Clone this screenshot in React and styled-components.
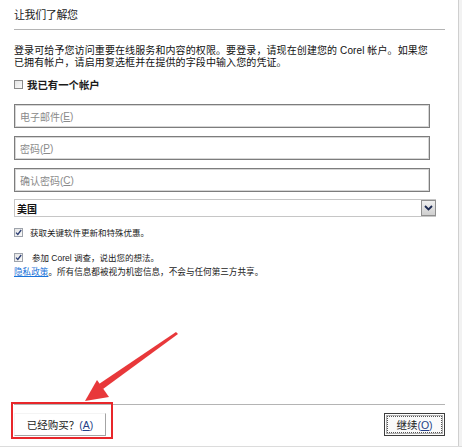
import React from "react";
import styled, { createGlobalStyle } from "styled-components";

const Global = createGlobalStyle`
  html, body {
    margin: 0;
    padding: 0;
    background: #fff;
    overflow: hidden;
  }
  body {
    font-family: "Liberation Sans", "Noto Sans CJK SC", sans-serif;
    color: #1a1a1a;
  }
`;

const Frame = styled.div`
  position: relative;
  width: 462px;
  height: 447px;
  box-sizing: border-box;
  display: flex;
  border-bottom: 1px solid #dcdcdc;
`;

const Main = styled.div`
  flex: 1;
  display: flex;
  flex-direction: column;
  padding: 0 13px 0 14px;
`;

const Rail = styled.div`
  width: 3px;
  border-left: 1px solid #cfcfcf;
  background: #f2f2f2;
`;

const Header = styled.div`
  height: 30px;
  box-sizing: border-box;
  border-bottom: 1px solid #b4b4b4;
  padding-top: 8px;
  font-size: 11px;
  line-height: 14px;
  letter-spacing: -0.4px;
  color: #222;
`;

const Intro = styled.p`
  margin: 15px 0 0;
  font-size: 10px;
  line-height: 12px;
  letter-spacing: 0.1px;
  color: #111;
`;

const Form = styled.div`
  width: 416px;
  display: flex;
  flex-direction: column;
`;

const CheckRow = styled.label`
  display: flex;
  align-items: center;
  gap: ${(p) => p.$gap || 6}px;
  height: ${(p) => p.$h || 12}px;
  margin-top: ${(p) => p.$top || 0}px;
  font-size: ${(p) => p.$size || 8.5}px;
  font-weight: ${(p) => (p.$bold ? 700 : 400)};
  color: #1a1a1a;
`;

const Box = styled.span`
  width: 7px;
  height: 7px;
  flex: none;
  border: 1px solid ${(p) => (p.$checked ? "#9ea3ab" : "#8a8a8a")};
  background: linear-gradient(135deg, #e4e4e4, #fafafa);
  display: flex;
  align-items: center;
  justify-content: center;
`;

const Field = styled.div`
  height: 24px;
  box-sizing: border-box;
  margin-top: ${(p) => p.$top}px;
  border: 1px solid #7d7d7d;
  box-shadow: inset 0 0 0 1px #d6d6d6;
  display: flex;
  align-items: center;
  padding-left: 5px;
  font-size: 10px;
  color: #8a8a8a;
  u {
    text-decoration: underline;
  }
`;

const Select = styled.div`
  width: 422px;
  height: 18px;
  box-sizing: border-box;
  margin-top: 7px;
  border: 1px solid #c6c6c6;
  border-right: none;
  display: flex;
  align-items: center;
  justify-content: space-between;
  padding-left: 2px;
  font-size: 10px;
  font-weight: 700;
  color: #111;
`;

const DropButton = styled.span`
  width: 15px;
  height: 16px;
  box-sizing: border-box;
  border: 1px solid #8f8f8f;
  background: linear-gradient(#f0f0f0, #cfcfcf);
  display: flex;
  align-items: center;
  justify-content: center;
`;

const Privacy = styled.div`
  margin-top: 3px;
  height: 12px;
  line-height: 12px;
  font-size: 8.6px;
  color: #1a1a1a;
  white-space: nowrap;
`;

const Link = styled.a`
  color: #1a73d9;
  text-decoration: underline;
`;

const Spacer = styled.div`
  flex: 1;
`;

const Footer = styled.div`
  height: 42px;
  box-sizing: border-box;
  border-top: 1px solid #b4b4b4;
  padding-top: 8px;
  display: flex;
  justify-content: space-between;
  align-items: flex-start;
`;

const Button = styled.button`
  width: ${(p) => p.$w}px;
  height: 23px;
  box-sizing: border-box;
  padding: 0;
  font-family: inherit;
  font-size: 10.5px;
  color: #1a1a1a;
  background: ${(p) => (p.$primary ? "#fafafa" : "#fff")};
  border: 1px solid;
  border-color: ${(p) =>
    p.$primary ? "#3c3c3c" : "#f4f4f4 #a4a4a4 #a4a4a4 #f4f4f4"};
  box-shadow: ${(p) =>
    p.$primary ? "inset 0 0 0 1px #fff, inset 0 0 0 2px #b0b0b0" : "none"};
  ${(p) =>
    p.$primary &&
    `outline: 1px dotted #555; outline-offset: -4px;`}
  display: flex;
  align-items: center;
  justify-content: center;
`;

const Key = styled.span`
  color: #253f86;
  u {
    text-decoration: underline;
  }
`;

const Highlight = styled.div`
  position: absolute;
  left: 11px;
  top: 402px;
  width: 102px;
  height: 37px;
  box-sizing: border-box;
  border: 2px solid #e8262a;
`;

const Arrow = styled.svg`
  position: absolute;
  left: 0;
  top: 0;
  pointer-events: none;
`;

const Check = () => (
  <svg width="7" height="7" viewBox="0 0 7 7">
    <path d="M1 3.6 L2.8 5.4 L6.2 1" fill="none" stroke="#2c3e74" strokeWidth="1.3" />
  </svg>
);

export default function App() {
  return (
    <>
      <Global />
      <Frame>
        <Main>
          <Header>让我们了解您</Header>
          <Intro>
            登录可给予您访问重要在线服务和内容的权限。要登录，请现在创建您的 Corel 帐户。如果您
            <br />
            已拥有帐户，请启用复选框并在提供的字段中输入您的凭证。
          </Intro>
          <Form>
            <CheckRow $top={8} $h={14} $bold $size={10.4} $gap={4}>
              <Box />
              我已有一个帐户
            </CheckRow>
            <Field $top={13}>
              电子邮件(<u>E</u>)
            </Field>
            <Field $top={8}>
              密码(<u>P</u>)
            </Field>
            <Field $top={8}>
              确认密码(<u>C</u>)
            </Field>
            <Select>
              美国
              <DropButton>
                <svg width="9" height="6" viewBox="0 0 9 6">
                  <path d="M1 1 L4.5 4.5 L8 1" fill="none" stroke="#1c2a52" strokeWidth="1.8" />
                </svg>
              </DropButton>
            </Select>
            <CheckRow $top={9} $gap={7}>
              <Box $checked>
                <Check />
              </Box>
              获取关键软件更新和特殊优惠。
            </CheckRow>
            <CheckRow $top={13} $gap={9}>
              <Box $checked>
                <Check />
              </Box>
              参加 Corel 调查，说出您的想法。
            </CheckRow>
            <Privacy>
              <Link>隐私政策</Link>。所有信息都被视为机密信息，不会与任何第三方共享。
            </Privacy>
          </Form>
          <Spacer />
          <Footer>
            <Button $w={92}>
              已经购买？<Key>(<u>A</u>)</Key>
            </Button>
            <Button $w={61} $primary>
              继续<Key>(<u>O</u>)</Key>
            </Button>
          </Footer>
        </Main>
        <Rail />
        <Highlight />
        <Arrow width="462" height="447" viewBox="0 0 462 447">
          <polygon points="178,334 176,332 99,384 103,389" fill="#e8383a" />
          <polygon points="85,401 97,380 109,397" fill="#e8383a" />
        </Arrow>
      </Frame>
    </>
  );
}
